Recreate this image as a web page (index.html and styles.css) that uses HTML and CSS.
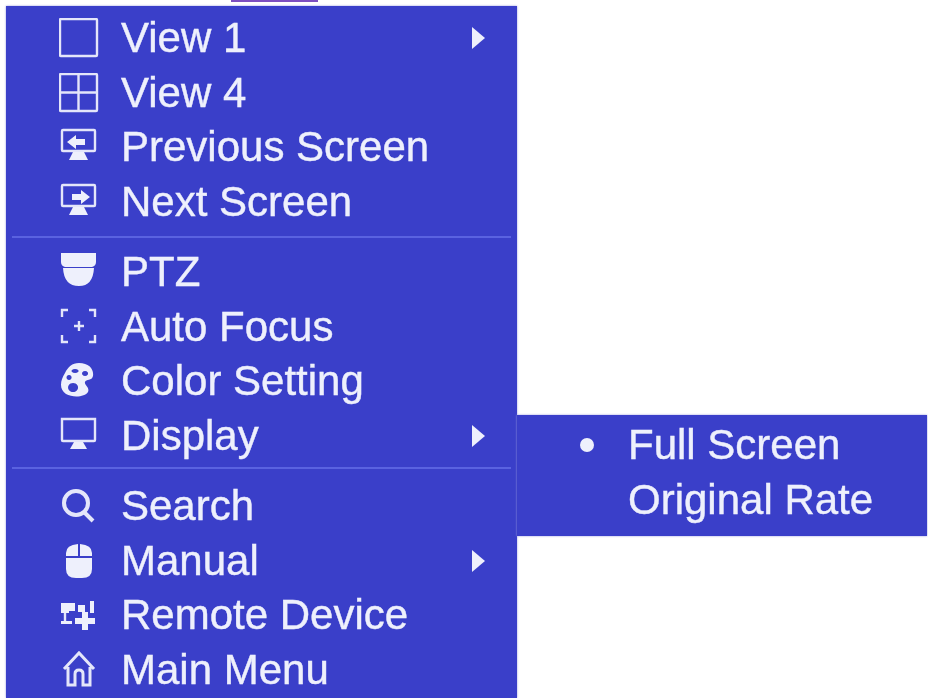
FILE: index.html
```html
<!DOCTYPE html>
<html lang="en">
<head>
    <meta charset="UTF-8">
    <title>Context Menu</title>
    <link rel="stylesheet" href="styles.css">
</head>
<body>
    <div class="top-mark"></div>
    <div class="menu">
        <div class="row">
            <svg class="icon" viewBox="0 0 40 40"><rect class="line" x="1" y="1" width="37" height="37" rx="1"/></svg>
            <span class="label">View 1</span>
            <span class="arrow"></span>
        </div>
        <div class="row">
            <svg class="icon" viewBox="0 0 40 40"><rect class="line" x="1" y="1" width="37" height="37" rx="1"/><path class="line" d="M19.5 1V38M1 19.5H38"/></svg>
            <span class="label">View 4</span>
        </div>
        <div class="row">
            <svg class="icon" viewBox="0 0 40 40"><rect class="line" x="3" y="3" width="33" height="21" rx="1"/><path class="fill" d="M10 33l4-8h11l4 8zM8 15l9-7v4h9v6h-9v4z"/></svg>
            <span class="label">Previous Screen</span>
        </div>
        <div class="row">
            <svg class="icon" viewBox="0 0 40 40"><rect class="line" x="3" y="3" width="33" height="21" rx="1"/><path class="fill" d="M10 33l4-8h11l4 8zM31 15l-9-7v4h-9v6h9v4z"/></svg>
            <span class="label">Next Screen</span>
        </div>

        <div class="sep sep-first"></div>

        <div class="row">
            <svg class="icon" viewBox="0 0 40 40"><path class="fill" d="M2 1H37V10Q37 14 33 15H6Q2 14 2 10zM4 16H35Q34 34 20 34Q5 34 4 16z"/></svg>
            <span class="label">PTZ</span>
        </div>
        <div class="row">
            <svg class="icon" viewBox="0 0 40 40"><path class="thin" d="M9 3H3V10M30 3H36V10M3 28V35H9M36 28V35H30M20 14V24M15 19H25"/></svg>
            <span class="label">Auto Focus</span>
        </div>
        <div class="row">
            <svg class="icon" viewBox="0 0 40 40"><path class="fill" fill-rule="evenodd" d="M20 2C30 2 35 8 34 15C33 20 27 18 26 21C25 24 31 26 29 31C26 36 14 37 7 33C0 28 1 20 6 12C9 6 13 2 20 2ZM16 8a3.5 2 0 1 0 .1 0ZM26 10a3 2.5 0 1 0 .1 0ZM14 22a5 4.5 0 1 0 .1 0ZM10 14a2.5 2.5 0 1 0 .1 0Z"/></svg>
            <span class="label">Color Setting</span>
        </div>
        <div class="row">
            <svg class="icon" viewBox="0 0 40 40"><path class="line" d="M3 3H36V24Q36 25 35 25H4Q3 25 3 24z"/><path class="fill" d="M11 33l4-7h9l4 7z"/></svg>
            <span class="label">Display</span>
            <span class="arrow"></span>
        </div>

        <div class="sep sep-second"></div>

        <div class="row">
            <svg class="icon" viewBox="0 0 40 40"><circle class="bold" cx="17" cy="17" r="12"/><path class="bold" d="M25 26L34 35"/></svg>
            <span class="label">Search</span>
        </div>
        <div class="row">
            <svg class="icon" viewBox="0 0 40 40"><path class="fill" d="M7 15V12Q7 4 19 3V15zM21 3Q33 4 33 12V15H21zM7 17H33V28Q33 37 23 37H17Q7 37 7 28z"/></svg>
            <span class="label">Manual</span>
            <span class="arrow"></span>
        </div>
        <div class="row">
            <svg class="icon" viewBox="0 0 40 40"><path class="fill" d="M2 8H16V16H10V18H2zM19 10H26V17H19zM31 6H35V18H31zM23 17H29V23H36V29H29V35H23V29H16V23H23zM2 26H13V29H2z"/><path class="thin" d="M6 18V26"/></svg>
            <span class="label">Remote Device</span>
        </div>
        <div class="row">
            <svg class="icon" viewBox="0 0 40 40"><path class="thick" d="M5 19L20 3L35 19M9 17V35H16V24Q16 20 20 20Q24 20 24 24V35H31V17"/></svg>
            <span class="label">Main Menu</span>
        </div>

        <div class="submenu">
            <div class="row sub-row">
                <span class="bullet"></span>
                <span class="label">Full Screen</span>
            </div>
            <div class="row sub-row">
                <span class="bullet-space"></span>
                <span class="label">Original Rate</span>
            </div>
        </div>
    </div>
</body>
</html>
```

FILE: styles.css
```css
html, body {
    margin: 0;
    height: 698px;
    overflow: hidden;
    background-color: #fff;
}
body {
    padding: 6px 0 0 6px;
    box-sizing: border-box;
    font-family: "Liberation Sans", Arial, sans-serif;
}
.top-mark {
    position: absolute;
    left: 231px;
    top: 0;
    width: 87px;
    height: 2px;
    background-color: #7d4fc0;
}
.menu {
    position: relative;
    width: 511px;
    height: 692px;
    padding-top: 5px;
    box-sizing: border-box;
    background-color: #3a3fc9;
    box-shadow: 0 0 2px #9a9de0;
    color: #eef0fc;
}
.row {
    display: flex;
    align-items: center;
    height: 54.5px;
    padding-left: 53px;
    filter: blur(0.6px);
}
.icon {
    flex: none;
    width: 40px;
    height: 40px;
    margin-right: 22px;
}
.line, .thin, .thick, .bold {
    fill: none;
    stroke: #e4e6fa;
}
.line, .thin {
    stroke-width: 2.4;
}
.thick {
    stroke-width: 3;
}
.bold {
    stroke-width: 4;
}
.fill {
    fill: #eef0fc;
}
.label {
    font-size: 42px;
    white-space: nowrap;
    -webkit-text-stroke: 0.4px #eef0fc;
}
.arrow {
    margin-left: auto;
    margin-right: 32px;
    border-left: 13px solid #eef0fc;
    border-top: 11px solid transparent;
    border-bottom: 11px solid transparent;
}
.sep {
    height: 2px;
    margin: 0 6px 0 6px;
    background-color: #5a62e0;
}
.sep-first {
    margin-top: 7px;
    margin-bottom: 7px;
}
.sep-second {
    margin-top: 4px;
    margin-bottom: 10px;
}
.submenu {
    position: absolute;
    left: 100%;
    top: 409px;
    width: 410px;
    height: 121px;
    padding-top: 3px;
    box-sizing: border-box;
    background-color: #3a3fc9;
    box-shadow: 0 0 2px #9a9de0;
}
.sub-row {
    padding-left: 63px;
}
.bullet, .bullet-space {
    flex: none;
    width: 14px;
    height: 14px;
    margin-right: 34px;
}
.bullet {
    border-radius: 50%;
    background-color: #eef0fc;
}
```
